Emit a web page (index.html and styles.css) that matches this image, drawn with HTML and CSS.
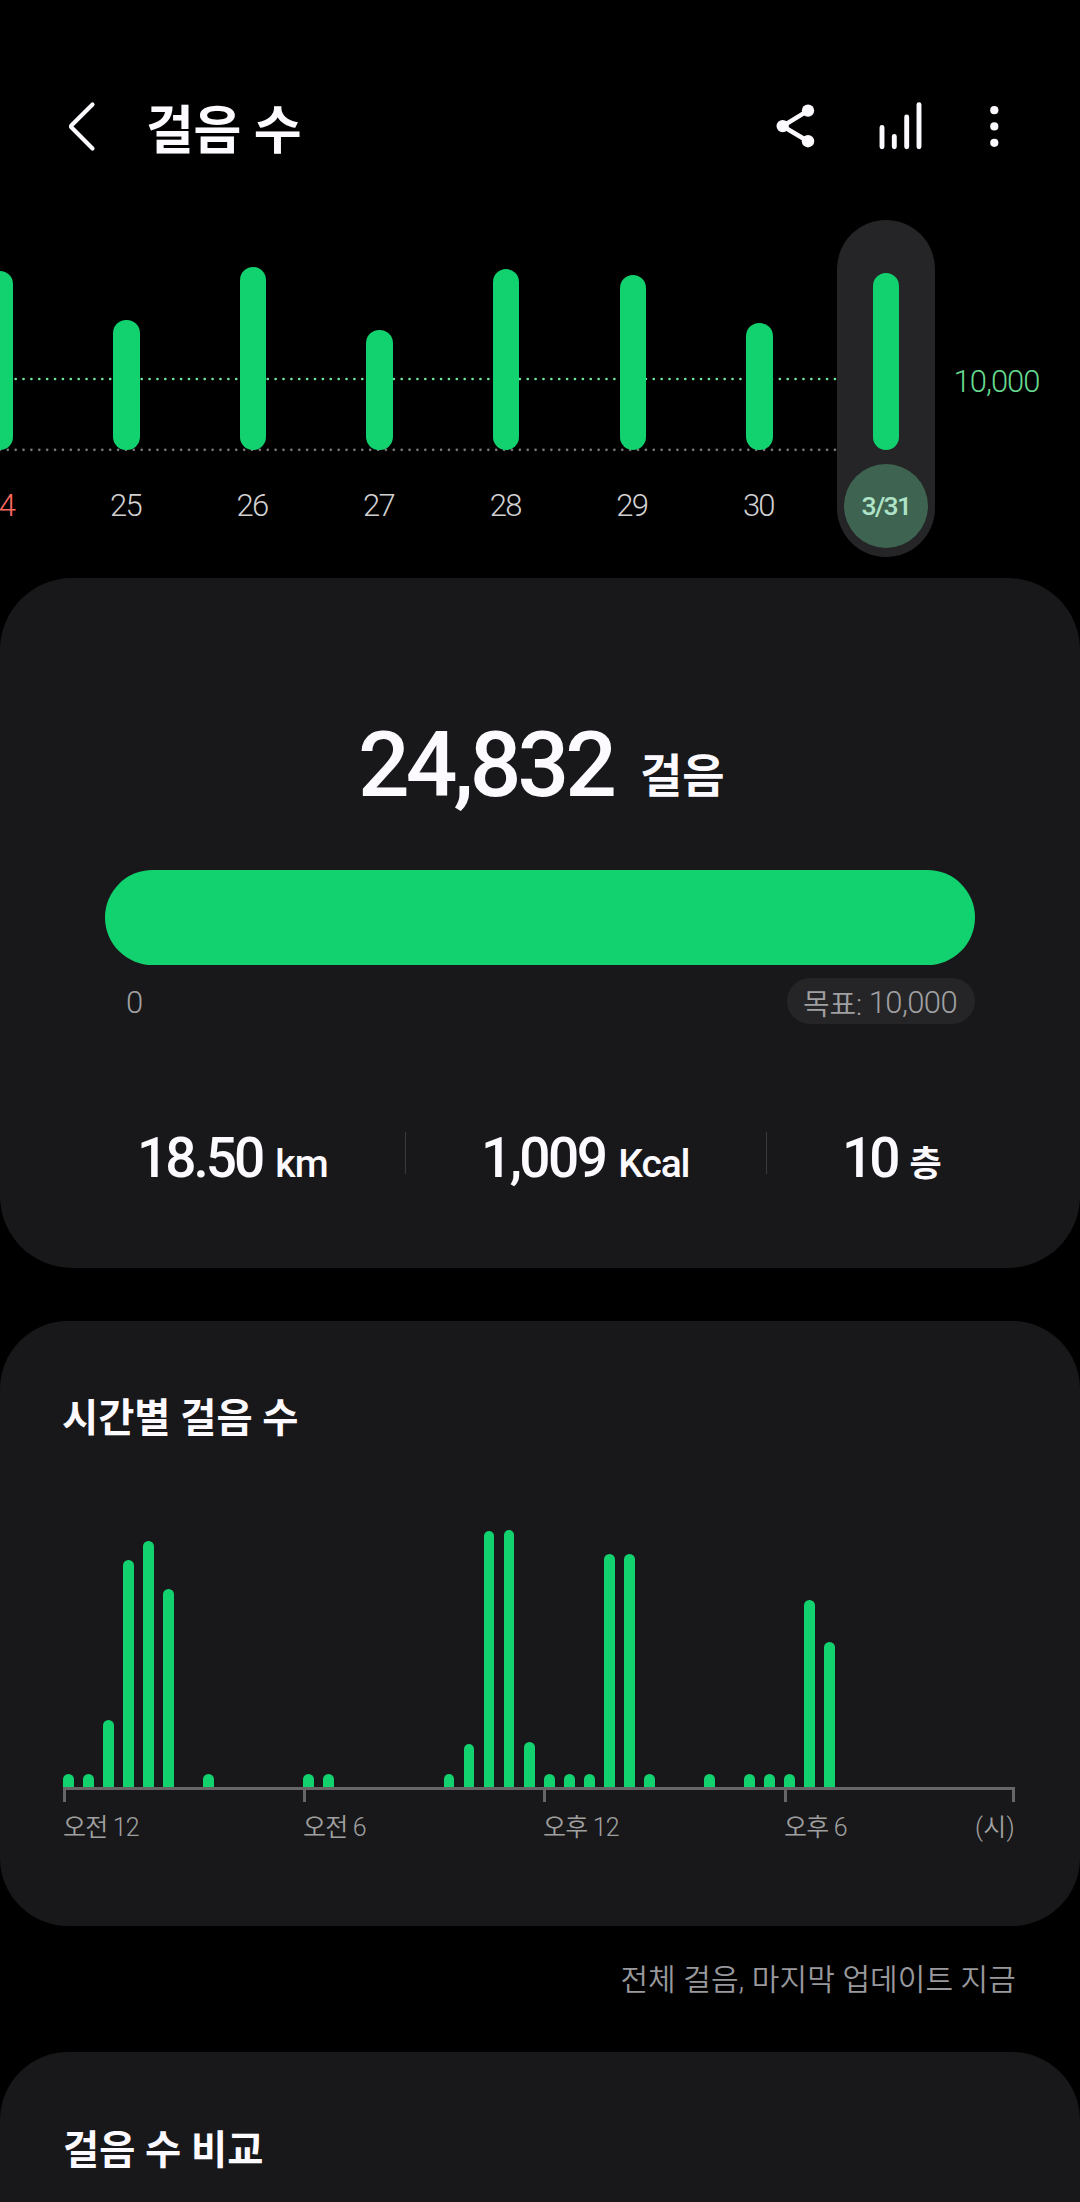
FILE: index.html
```html
<!DOCTYPE html>
<html lang="ko">
<head>
<meta charset="utf-8">
<title>걸음 수</title>
<link rel="stylesheet" href="styles.css">
</head>
<body>
<main class="screen">
  <header class="topbar">
    <svg class="icon-back" width="40" height="60" viewBox="0 0 40 60"><path d="M29.5 8.5 8.6 29.2Q7.4 30.4 8.6 31.6L29.5 52.5" fill="none" stroke="#fcfaff" stroke-width="4.2" stroke-linecap="round"/></svg>
    <h1 class="title">걸음 수</h1>
    <div class="actions">
      <svg class="icon-share" width="50" height="50" viewBox="0 0 50 50"><path d="M37 9.6 11.7 25.1 37 40.2" fill="none" stroke="#fcfaff" stroke-width="4.6"/><g fill="#fcfaff"><circle cx="37" cy="9.6" r="6.2"/><circle cx="11.7" cy="25.1" r="6.2"/><circle cx="37" cy="40.2" r="6.2"/></g></svg>
      <svg class="icon-stats" width="50" height="50" viewBox="0 0 50 50"><path d="M7 26.4V45.8M19.3 35.4V45.8M31.7 16V45.8M44 3.6V45.8" fill="none" stroke="#fcfaff" stroke-width="4.9" stroke-linecap="round"/></svg>
      <svg class="icon-more" width="20" height="50" viewBox="0 0 20 50"><g fill="#fcfaff"><circle cx="10.3" cy="9.2" r="4.1"/><circle cx="10.3" cy="25.4" r="4.1"/><circle cx="10.3" cy="41.8" r="4.1"/></g></svg>
    </div>
  </header>

  <section class="week">
    <svg class="gridlines" width="837" height="80" viewBox="0 0 837 80"><path d="M-.1 3H836" stroke="#6ee79c" class="dots"/><path d="M-.1 73.8H836" stroke="#77777a" class="dots"/></svg>
    <div class="day sunday"><div class="track"><i style="height:179px"></i></div><span>24</span></div>
    <div class="day"><div class="track"><i style="height:130.5px"></i></div><span>25</span></div>
    <div class="day"><div class="track"><i style="height:183px"></i></div><span>26</span></div>
    <div class="day"><div class="track"><i style="height:120px"></i></div><span>27</span></div>
    <div class="day"><div class="track"><i style="height:181px"></i></div><span>28</span></div>
    <div class="day"><div class="track"><i style="height:175px"></i></div><span>29</span></div>
    <div class="day"><div class="track"><i style="height:127px"></i></div><span>30</span></div>
    <div class="day selected"><div class="track"><i style="height:176.7px"></i></div><span>3/31</span></div>
    <div class="goal-label">10,000</div>
  </section>

  <section class="card summary">
    <div class="total"><b>24,832</b><span>걸음</span></div>
    <div class="progress"></div>
    <div class="range"><span class="zero">0</span><span class="target">목표: <em>10,000</em></span></div>
    <div class="metrics">
      <div class="metric distance"><b>18.50</b><span>km</span></div>
      <div class="metric energy"><b>1,009</b><span>Kcal</span></div>
      <div class="metric floors"><b>10</b><span>층</span></div>
    </div>
  </section>

  <section class="card hourly">
    <h2>시간별 걸음 수</h2>
    <div class="bars">
      <i style="height:13px"></i><i style="height:13px"></i><i style="height:66.7px"></i><i style="height:227px"></i><i style="height:246.5px"></i><i style="height:198.5px"></i>
      <i></i><i style="height:13px"></i><i></i><i></i><i></i><i></i>
      <i style="height:13px"></i><i style="height:13px"></i><i></i><i></i><i></i><i></i>
      <i></i><i style="height:13px"></i><i style="height:43px"></i><i style="height:256px"></i><i style="height:257.5px"></i><i style="height:44.7px"></i>
      <i style="height:13px"></i><i style="height:13px"></i><i style="height:13px"></i><i style="height:233px"></i><i style="height:233px"></i><i style="height:13px"></i>
      <i></i><i></i><i style="height:13px"></i><i></i><i style="height:13px"></i><i style="height:13px"></i>
      <i style="height:13px"></i><i style="height:187.3px"></i><i style="height:145px"></i>
    </div>
    <div class="axis"><span>오전 12</span><span>오전 6</span><span>오후 12</span><span>오후 6</span><span class="unit">(시)</span></div>
  </section>

  <p class="updated">전체 걸음, 마지막 업데이트 지금</p>

  <section class="card compare"><h2>걸음 수 비교</h2></section>
</main>
</body>
</html>
```
FILE: styles.css
```css
* { box-sizing: border-box; margin: 0; padding: 0; }
body { background: #000; font-family: Roboto, "Noto Sans CJK KR", sans-serif; color: #fcfaff; }
i, em { font-style: normal; }
svg { display: block; flex: none; }
.screen { width: 1080px; height: 2202px; overflow: hidden; background: #000; }

/* Top bar */
.topbar { display: flex; align-items: center; height: 176px; padding: 76px 76px 0 63px; }
.title { margin: 12px 0 0 43px; font-size: 52px; font-weight: 700; line-height: 60px; letter-spacing: -0.3px; white-space: nowrap; }
.actions { display: flex; align-items: center; margin-left: auto; }
.icon-stats { margin-left: 54px; }
.icon-more { margin-left: 59px; }

/* Week chart */
.week { position: relative; display: flex; gap: 28.6px; height: 402px; padding-top: 44px; margin-left: -49.2px; white-space: nowrap; }
.gridlines { position: absolute; left: 49.2px; top: 200px; }
.dots { stroke-width: 2.7; stroke-dasharray: 0 7.878; stroke-linecap: round; }
.day { position: relative; flex: none; width: 98px; height: 337px; border-radius: 49px; }
.track { display: flex; align-items: flex-end; justify-content: center; height: 230px; }
.track i { width: 26.4px; border-radius: 13.2px; background: #12d16f; }
.day span { display: block; width: 84px; height: 84px; margin: 14px auto 0; border-radius: 42px; text-align: center; text-indent: -2px; font-size: 31px; font-weight: 350; line-height: 84px; letter-spacing: -1.7px; color: #d2d0d2; }
.day.sunday span { color: #ff6a60; }
.selected { background: #252527; }
.day.selected span { background: #3e6351; color: #aee3c8; font-size: 26.5px; font-weight: 500; letter-spacing: -1.7px; text-indent: 0; line-height: 83px; }
.goal-label { margin: 140px 0 0 -10px; font-size: 31px; font-weight: 350; line-height: 44px; letter-spacing: -1px; color: #66d98f; }

/* Cards */
.card { background: #18181a; border-radius: 68px; }
.summary { height: 690px; padding: 132px 105px 0; border-radius: 72px; }
.total { display: flex; align-items: baseline; height: 160px; padding: 2px 0 0 253px; line-height: 106px; white-space: nowrap; }
.total b { font-size: 91px; font-weight: 500; letter-spacing: -4px; }
.total span { margin-left: 27px; font-size: 46px; font-weight: 700; transform: translateY(-4px); }
.progress { height: 95px; border-radius: 47.5px; background: #12d16f; }
.range { display: flex; justify-content: space-between; align-items: center; height: 46px; margin-top: 13px; padding-left: 21px; color: #a0a0a3; font-size: 31px; font-weight: 350; }
.range .zero { padding-top: 3px; }
.target { display: flex; align-items: center; width: 188px; height: 46px; padding: 2px 0 0 16px; border-radius: 23px; background: #252527; font-size: 29px; letter-spacing: -0.2px; white-space: pre; }
.target em { font-size: 31px; letter-spacing: -0.6px; }
.metrics { display: grid; grid-template: 42px / 300px 361px 209px; height: 42px; margin-top: 108px; }
.metric { display: flex; align-items: baseline; height: 42px; line-height: 52px; border-left: 1.5px solid #39393b; white-space: nowrap; }
.metric b { font-size: 55px; font-weight: 500; letter-spacing: -3px; }
.metric span { font-size: 39px; font-weight: 500; margin-left: 13px; letter-spacing: -1px; }
.distance { border: 0; padding-left: 32px; }
.energy { padding-left: 75px; }
.energy b { letter-spacing: -2.6px; }
.energy span { letter-spacing: -1.1px; }
.floors { padding-left: 75px; }
.floors b { letter-spacing: -4px; }
.metric.floors span { font-size: 35px; font-weight: 700; transform: translateY(-1px); }

h2 { font-size: 39.3px; font-weight: 700; line-height: 50px; white-space: nowrap; }
.hourly { height: 605px; margin-top: 53px; padding: 73px 65px 0 63px; }
.hourly h2, .compare h2 { margin-left: -1px; }
.bars { display: flex; align-items: flex-end; gap: 9.24px; height: 343px; }
.bars i { flex: none; width: 10.8px; border-radius: 5.4px 5.4px 0 0; background: #12d16f; }
.axis { display: grid; grid-template-columns: 240px 240px 241px 196px auto; width: 952px; border-top: 3px solid #666; color: #a0a0a0; font-size: 25px; font-weight: 350; letter-spacing: -0.8px; }
.axis span { padding-top: 20px; line-height: 36px; background: linear-gradient(#666, #666) 0 0 / 3px 12px no-repeat; white-space: nowrap; }
.axis .unit { background-position: 100% 0; text-align: right; letter-spacing: 0.3px; margin-left: -10px; }
.updated { height: 126px; padding: 33px 64px 0; text-align: right; font-size: 30px; font-weight: 350; line-height: 42px; letter-spacing: 0.1px; color: #98989d; }
.compare { height: 240px; padding: 74px 64px 0; }
```
